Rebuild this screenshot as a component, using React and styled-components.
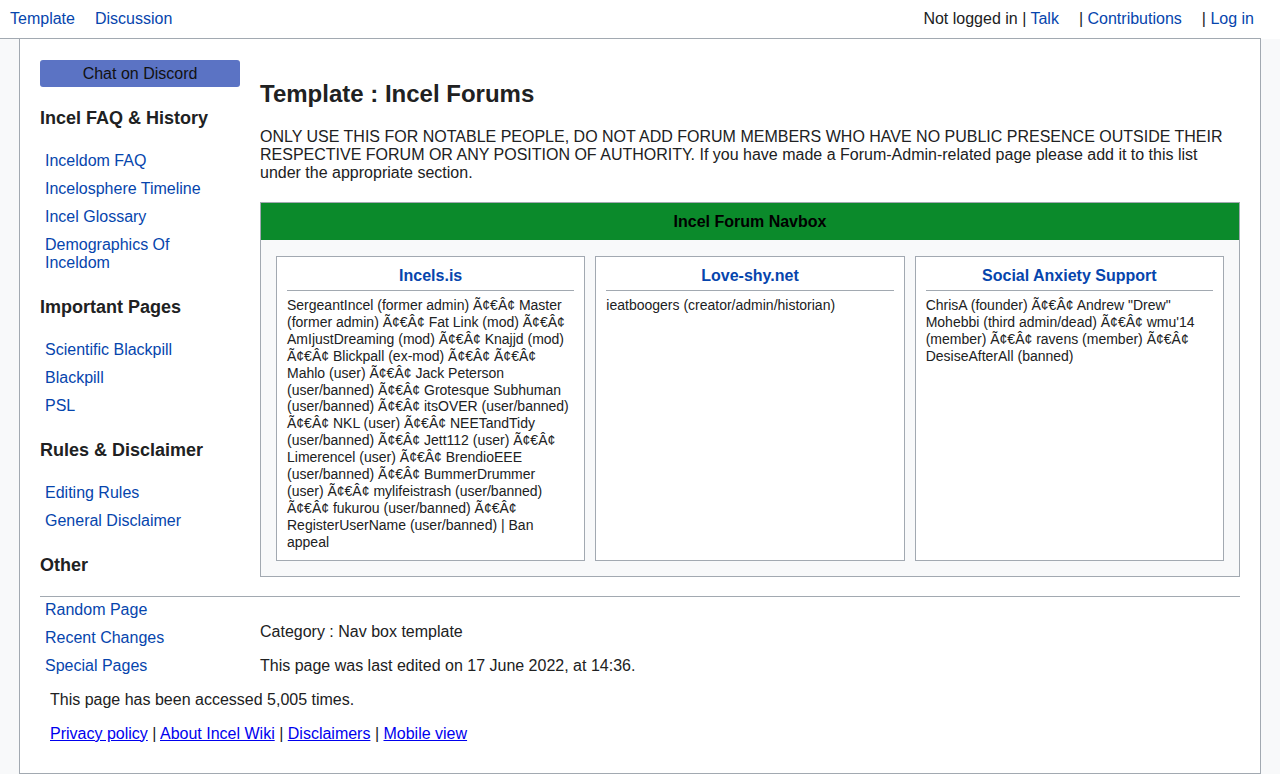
import React from "react";
import styled, { createGlobalStyle } from "styled-components";

const Global = createGlobalStyle`
  html, body { margin: 0; padding: 0; }
  body {
    background: #f8f9fa;
    font-family: "Liberation Sans", Arial, Helvetica, sans-serif;
    color: #202122;
    font-size: 16px;
  }
  * { box-sizing: border-box; }
`;

const LINE = "#a2a9b1";
const LINK = "#0645ad";

const Header = styled.header`
  height: 39px;
  display: flex;
  align-items: center;
  justify-content: space-between;
  padding: 0 26px 1px 10px;
  background:
    linear-gradient(${LINE}, ${LINE}) no-repeat left bottom / calc(100% - 19px) 1px,
    #fff;
  line-height: 18px;
`;

const NavGroup = styled.nav`
  display: flex;
  align-items: center;
  gap: ${(p) => p.$gap}px;
`;

const TopLink = styled.a`
  color: ${LINK};
  text-decoration: none;
  cursor: pointer;
`;

const Plain = styled.span`
  color: #202122;
`;

const Box = styled.main`
  margin: 0 19px;
  background: #fff;
  border: 1px solid ${LINE};
  border-top: none;
  display: grid;
  grid-template-columns: 200px 1fr;
  column-gap: 20px;
  padding: 21px 20px 30px;
`;

const Sidebar = styled.aside`
  display: flex;
  flex-direction: column;
`;

const DiscordButton = styled.a`
  display: block;
  height: 27px;
  line-height: 27px;
  text-align: center;
  background: #5b73c4;
  color: #111;
  border-radius: 3px;
  font-size: 16px;
  cursor: pointer;
`;

const SideHeading = styled.h3`
  margin: ${(p) => (p.$first ? 21 : 25)}px 0 0;
  font-size: 18px;
  line-height: 21px;
  font-weight: bold;
  color: #202122;
`;

const SideList = styled.ul`
  list-style: none;
  margin: ${(p) => p.$top}px 0 0;
  padding: 0 12px 0 5px;
  display: flex;
  flex-direction: column;
  gap: 10px;
`;

const SideItem = styled.li`
  line-height: 18px;
  a {
    color: ${LINK};
    text-decoration: none;
    cursor: pointer;
  }
`;

const Content = styled.section`
  display: flex;
  flex-direction: column;
`;

const Title = styled.h1`
  margin: 20px 0 0;
  font-size: 24px;
  line-height: 28px;
  font-weight: bold;
  color: #202122;
`;

const Lead = styled.p`
  margin: 20px 0 0;
  line-height: 18px;
`;

const Navbox = styled.div`
  margin-top: 20px;
  border: 1px solid ${LINE};
  background: #f8f9fa;
`;

const NavboxTitle = styled.div`
  height: 37px;
  line-height: 37px;
  background: #0b8a2b;
  color: #000;
  font-weight: bold;
  text-align: center;
`;

const NavboxBody = styled.div`
  padding: 16px 15px 15px;
  display: grid;
  grid-template-columns: repeat(3, 1fr);
  gap: 10px;
`;

const Group = styled.div`
  background: #fff;
  border: 1px solid ${LINE};
  padding: 10px 10px 9px;
`;

const GroupTitle = styled.a`
  display: block;
  text-align: center;
  font-weight: bold;
  line-height: 18px;
  color: ${LINK};
  text-decoration: none;
  padding-bottom: 5px;
  border-bottom: 1px solid ${LINE};
  cursor: pointer;
`;

const GroupText = styled.div`
  margin-top: 6px;
  font-size: 14px;
  line-height: 16.9px;
`;

const Bullet = styled.span`
  white-space: nowrap;
`;

const Divider = styled.hr`
  grid-column: 1 / -1;
  margin: 19px 0 0;
  border: none;
  border-top: 1px solid ${LINE};
  height: 0;
`;

const FooterMeta = styled.div`
  padding-top: 26px;
  display: flex;
  flex-direction: column;
  gap: 16px;
  line-height: 18px;
`;

const FooterInfo = styled.div`
  grid-column: 1 / -1;
  padding-left: 10px;
  margin-top: 16px;
  display: flex;
  flex-direction: column;
  gap: 16px;
  line-height: 18px;
`;

const FooterLink = styled.a`
  color: #0000ee;
  text-decoration: underline;
  cursor: pointer;
`;

const B = "Ã¢€Â¢";

const sections = [
  {
    title: "Incel FAQ & History",
    links: ["Inceldom FAQ", "Incelosphere Timeline", "Incel Glossary", "Demographics Of Inceldom"],
  },
  { title: "Important Pages", links: ["Scientific Blackpill", "Blackpill", "PSL"] },
  { title: "Rules & Disclaimer", links: ["Editing Rules", "General Disclaimer"] },
];

const groups = [
  {
    title: "Incels.is",
    items: [
      "SergeantIncel (former admin)",
      "Master (former admin)",
      "Fat Link (mod)",
      "AmIjustDreaming (mod)",
      "Knajjd (mod)",
      "Blickpall (ex-mod)",
      "",
      "Mahlo (user)",
      "Jack Peterson (user/banned)",
      "Grotesque Subhuman (user/banned)",
      "itsOVER (user/banned)",
      "NKL (user)",
      "NEETandTidy (user/banned)",
      "Jett112 (user)",
      "Limerencel (user)",
      "BrendioEEE (user/banned)",
      "BummerDrummer (user)",
      "mylifeistrash (user/banned)",
      "fukurou (user/banned)",
      "RegisterUserName (user/banned) | Ban appeal",
    ],
  },
  { title: "Love-shy.net", items: ["ieatboogers (creator/admin/historian)"] },
  {
    title: "Social Anxiety Support",
    items: [
      "ChrisA (founder)",
      'Andrew "Drew" Mohebbi (third admin/dead)',
      "wmu'14 (member)",
      "ravens (member)",
      "DesiseAfterAll (banned)",
    ],
  },
];

function GroupList({ items }) {
  const out = [];
  items.forEach((t, i) => {
    if (i > 0) {
      out.push(" ");
      out.push(<Bullet key={"b" + i}>{B}</Bullet>);
      if (t) out.push(" ");
    }
    if (t) out.push(<React.Fragment key={"t" + i}>{t}</React.Fragment>);
  });
  return <GroupText>{out}</GroupText>;
}

export default function App() {
  return (
    <>
      <Global />
      <Header>
        <NavGroup $gap={20}>
          <TopLink>Template</TopLink>
          <TopLink>Discussion</TopLink>
        </NavGroup>
        <NavGroup $gap={20}>
          <span>
            <Plain>Not logged in | </Plain>
            <TopLink>Talk</TopLink>
          </span>
          <span>
            <Plain>| </Plain>
            <TopLink>Contributions</TopLink>
          </span>
          <span>
            <Plain>| </Plain>
            <TopLink>Log in</TopLink>
          </span>
        </NavGroup>
      </Header>
      <Box>
        <Sidebar>
          <DiscordButton>Chat on Discord</DiscordButton>
          {sections.map((s, i) => (
            <React.Fragment key={s.title}>
              <SideHeading $first={i === 0}>{s.title}</SideHeading>
              <SideList $top={23}>
                {s.links.map((l) => (
                  <SideItem key={l}>
                    <a>{l}</a>
                  </SideItem>
                ))}
              </SideList>
            </React.Fragment>
          ))}
          <SideHeading>Other</SideHeading>
        </Sidebar>
        <Content>
          <Title>Template : Incel Forums</Title>
          <Lead>
            ONLY USE THIS FOR NOTABLE PEOPLE, DO NOT ADD FORUM MEMBERS WHO HAVE NO PUBLIC PRESENCE
            OUTSIDE THEIR RESPECTIVE FORUM OR ANY POSITION OF AUTHORITY. If you have made a
            Forum-Admin-related page please add it to this list under the appropriate section.
          </Lead>
          <Navbox>
            <NavboxTitle>Incel Forum Navbox</NavboxTitle>
            <NavboxBody>
              {groups.map((g) => (
                <Group key={g.title}>
                  <GroupTitle>{g.title}</GroupTitle>
                  <GroupList items={g.items} />
                </Group>
              ))}
            </NavboxBody>
          </Navbox>
        </Content>
        <Divider />
        <SideList $top={4}>
          {["Random Page", "Recent Changes", "Special Pages"].map((l) => (
            <SideItem key={l}>
              <a>{l}</a>
            </SideItem>
          ))}
        </SideList>
        <FooterMeta>
          <div>Category : Nav box template</div>
          <div>This page was last edited on 17 June 2022, at 14:36.</div>
        </FooterMeta>
        <FooterInfo>
          <div>This page has been accessed 5,005 times.</div>
          <div>
            <FooterLink>Privacy policy</FooterLink> | <FooterLink>About Incel Wiki</FooterLink> |{" "}
            <FooterLink>Disclaimers</FooterLink> | <FooterLink>Mobile view</FooterLink>
          </div>
        </FooterInfo>
      </Box>
    </>
  );
}
